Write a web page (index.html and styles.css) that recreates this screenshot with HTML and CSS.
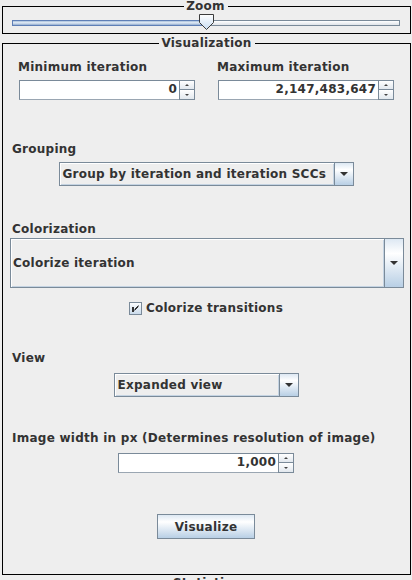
FILE: index.html
```html
<!DOCTYPE html>
<html>
<head>
<meta charset="utf-8">
<title>Visualization</title>
<link rel="stylesheet" href="styles.css">
</head>
<body>
<fieldset class="group zoom">
  <legend>Zoom</legend>
  <div class="slider" style="--value:50%">
    <div class="track">
      <div class="track-fill"></div>
      <div class="track-rest"></div>
      <svg class="thumb" width="15" height="16" viewBox="0 0 15 16">
        <defs>
          <linearGradient id="tg" x1="0" y1="0" x2="0" y2="1">
            <stop offset="0" stop-color="#ffffff"/>
            <stop offset="1" stop-color="#c8ddf2"/>
          </linearGradient>
        </defs>
        <path d="M0.5 0.5 H14.5 V8.5 L7.5 15.5 L0.5 8.5 Z" fill="url(#tg)" stroke="#3c3c3c" stroke-width="1"/>
      </svg>
    </div>
  </div>
</fieldset>

<fieldset class="group vis">
  <legend>Visualization</legend>

  <div class="iter-grid">
    <div class="iter-col">
      <div class="label">Minimum iteration</div>
      <div class="spinner">
        <div class="spin-field">0</div>
        <div class="spin-buttons">
          <div class="spin-btn"><span class="spin-up"></span></div>
          <div class="spin-btn"><span class="spin-down"></span></div>
        </div>
      </div>
    </div>
    <div class="iter-col">
      <div class="label">Maximum iteration</div>
      <div class="spinner">
        <div class="spin-field">2,147,483,647</div>
        <div class="spin-buttons">
          <div class="spin-btn"><span class="spin-up"></span></div>
          <div class="spin-btn"><span class="spin-down"></span></div>
        </div>
      </div>
    </div>
  </div>

  <div class="label section grouping-label">Grouping</div>
  <div class="center grouping-row">
    <div class="combo combo-grouping">
      <div class="combo-text">Group by iteration and iteration SCCs</div>
      <div class="combo-arrow"></div>
    </div>
  </div>

  <div class="label section colorization-label">Colorization</div>
  <div class="combo combo-big">
    <div class="combo-text">Colorize iteration</div>
    <div class="combo-arrow"></div>
  </div>

  <div class="center check-row">
    <svg class="checkbox" width="13" height="13" viewBox="0 0 13 13">
      <defs>
        <linearGradient id="cg" x1="0" y1="0" x2="0" y2="1">
          <stop offset="0" stop-color="#ffffff"/>
          <stop offset="1" stop-color="#c8d9ea"/>
        </linearGradient>
      </defs>
      <rect x="0.5" y="0.5" width="12" height="12" fill="url(#cg)" stroke="#7a8a99"/>
      <rect x="3" y="5" width="2" height="5" fill="#333333"/>
      <path d="M5.5 7.5 L9.5 3.5 M5.5 8.5 L9.5 4.5" stroke="#333333" stroke-width="1" fill="none"/>
    </svg>
    <span class="check-text">Colorize transitions</span>
  </div>

  <div class="label section view-label">View</div>
  <div class="center view-row">
    <div class="combo combo-view">
      <div class="combo-text">Expanded view</div>
      <div class="combo-arrow"></div>
    </div>
  </div>

  <div class="label section image-label">Image width in px (Determines resolution of image)</div>
  <div class="center image-row">
    <div class="spinner">
      <div class="spin-field">1,000</div>
      <div class="spin-buttons">
        <div class="spin-btn"><span class="spin-up"></span></div>
        <div class="spin-btn"><span class="spin-down"></span></div>
      </div>
    </div>
  </div>

  <div class="center button-row">
    <button class="btn" type="button">Visualize</button>
  </div>
</fieldset>

<fieldset class="group next">
  <legend>Statistics</legend>
</fieldset>
</body>
</html>
```

FILE: styles.css
```css
html, body {
  margin: 0;
  padding: 0;
  overflow: hidden;
  background: #eeeeee;
}

body {
  width: 412px;
  height: 580px;
  font-family: "DejaVu Sans", "Noto Sans", sans-serif;
  font-weight: bold;
  font-size: 12px;
  line-height: 14px;
  letter-spacing: 0.25px;
  color: #333333;
}

.group {
  border: 1px solid #000000;
  margin: 0 1px 0 2px;
  padding: 0;
  min-width: 0;
}

.group > legend {
  margin: 0 auto;
  padding: 0 3px 0 2px;
  font-size: 12px;
  line-height: 12px;
  color: #333333;
}

/* Zoom panel */
.zoom {
  padding: 0 10px 0 9px;
}

.slider {
  height: 21px;
  padding-top: 8px;
  box-sizing: border-box;
}

.track {
  position: relative;
  height: 6px;
  display: flex;
}

.track-fill {
  width: var(--value);
  box-sizing: border-box;
  border: 1px solid #5f7fb6;
  border-right: 0;
  background: linear-gradient(#a8c0dc 0%, #e3ecf6 45%, #8faace 100%);
}

.track-rest {
  flex: 1;
  box-sizing: border-box;
  border: 1px solid #7a8a99;
  border-left: 0;
  background: linear-gradient(#ffffff 0%, #dfe3e8 100%);
}

.thumb {
  position: absolute;
  left: calc(var(--value) - 7px);
  top: -6px;
  display: block;
}

/* Visualization panel */
.vis {
  margin-top: 3px;
  padding: 11px 6px 35px 7px;
}

.label {
  margin-left: 2px;
  white-space: nowrap;
}

.iter-grid {
  display: grid;
  grid-template-columns: 177px 177px;
  column-gap: 22px;
  margin-left: 8px;
}

.iter-col .label {
  margin-left: 0;
}

.iter-col .spinner {
  margin-top: 6px;
  margin-left: 1px;
}

.spinner {
  display: flex;
  width: 176px;
  height: 20px;
}

.spin-field {
  flex: 1;
  box-sizing: border-box;
  border: 1px solid #7a8a99;
  border-bottom-color: #9aa6b2;
  background: #ffffff;
  text-align: right;
  padding-right: 2px;
  line-height: 17px;
}

.spin-buttons {
  width: 16px;
  margin-left: -1px;
  display: flex;
  flex-direction: column;
}

.spin-btn {
  height: 10px;
  box-sizing: border-box;
  border: 1px solid #7a8a99;
  background: linear-gradient(#ffffff, #e2e8ee);
  display: flex;
  align-items: center;
  justify-content: center;
}

.spin-btn + .spin-btn {
  border-top: 0;
}

.spin-up {
  width: 0;
  height: 0;
  border-left: 2px solid transparent;
  border-right: 2px solid transparent;
  border-bottom: 2px solid #444444;
}

.spin-down {
  width: 0;
  height: 0;
  border-left: 2px solid transparent;
  border-right: 2px solid transparent;
  border-top: 2px solid #444444;
}

.center {
  display: flex;
  justify-content: center;
  padding-right: 2px;
}

.grouping-label { margin-top: 42px; }
.grouping-row { margin-top: 6px; }
.colorization-label { margin-top: 36px; }
.combo-big { margin-top: 2px; }
.check-row { margin-top: 13px; }
.view-label { margin-top: 36px; }
.view-row { margin-top: 8px; }
.image-label { margin-top: 34px; }
.image-row { margin-top: 8px; }
.button-row { margin-top: 41px; }

.combo {
  display: flex;
  box-sizing: border-box;
  height: 24px;
  border: 1px solid #7a8a99;
  background: #eeeeee;
}

.combo-text {
  flex: 1;
  display: flex;
  align-items: center;
  padding-left: 3px;
  white-space: nowrap;
  overflow: hidden;
  box-shadow: inset 1px 1px 0 #ffffff, inset -1px -1px 0 #c4d3e2;
}

.combo-arrow {
  width: 18px;
  border-left: 1px solid #7a8a99;
  background: linear-gradient(#dde8f3 0%, #ffffff 30%, #b8cfe5 100%);
  display: flex;
  align-items: center;
  justify-content: center;
}

.combo-arrow::after {
  content: "";
  width: 0;
  height: 0;
  border-left: 4px solid transparent;
  border-right: 4px solid transparent;
  border-top: 4px solid #333333;
}

.combo-grouping { width: 295px; }

.combo-big {
  height: 50px;
}

.combo-big .combo-text {
  padding-left: 2px;
}

.combo-view { width: 185px; }

.check-row {
  align-items: center;
  gap: 4px;
  height: 14px;
}

.checkbox {
  display: block;
}

.btn {
  width: 98px;
  height: 25px;
  margin: 0;
  padding: 0;
  box-sizing: border-box;
  border: 1px solid #7a8a99;
  border-radius: 0;
  background: linear-gradient(#dde8f3 0%, #ffffff 30%, #b8cfe5 100%);
  font-family: "DejaVu Sans", "Noto Sans", sans-serif;
  font-weight: bold;
  font-size: 12px;
  letter-spacing: 0.25px;
  color: #333333;
}

.next {
  margin-top: 2px;
  height: 40px;
}
```
